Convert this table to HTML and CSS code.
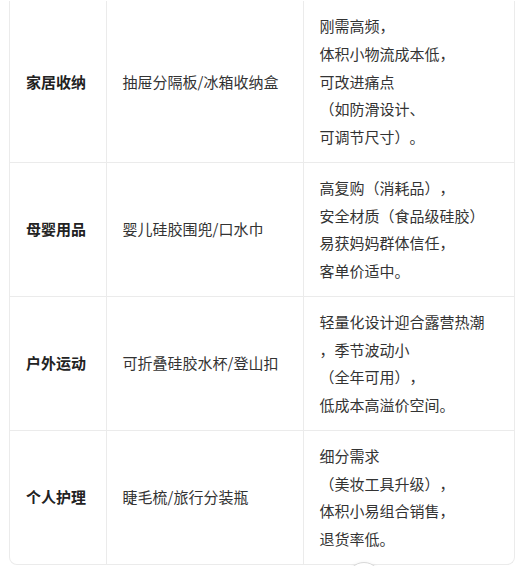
FILE: index.html
```html
<!DOCTYPE html>
<html lang="zh-CN">
<head>
<meta charset="utf-8">
<title>选品表</title>
<link rel="stylesheet" href="styles.css">
</head>
<body>
<div class="table-wrap">
  <table class="pick-table">
    <tbody>
      <tr>
        <td class="cat">家居收纳</td>
        <td class="prod">抽屉分隔板/冰箱收纳盒</td>
        <td class="why">刚需高频，<br>体积小物流成本低，<br>可改进痛点<br>（如防滑设计、<br>可调节尺寸）。</td>
      </tr>
      <tr>
        <td class="cat">母婴用品</td>
        <td class="prod">婴儿硅胶围兜/口水巾</td>
        <td class="why">高复购（消耗品），<br>安全材质（食品级硅胶）<br>易获妈妈群体信任，<br>客单价适中。</td>
      </tr>
      <tr>
        <td class="cat">户外运动</td>
        <td class="prod">可折叠硅胶水杯/登山扣</td>
        <td class="why">轻量化设计迎合露营热潮<br>，季节波动小<br>（全年可用），<br>低成本高溢价空间。</td>
      </tr>
      <tr>
        <td class="cat">个人护理</td>
        <td class="prod">睫毛梳/旅行分装瓶</td>
        <td class="why">细分需求<br>（美妆工具升级），<br>体积小易组合销售，<br>退货率低。</td>
      </tr>
    </tbody>
  </table>
</div>
<button class="scroll-btn" type="button" aria-label="滚动到底部"></button>
</body>
</html>
```

FILE: styles.css
```css
html, body {
  margin: 0;
  padding: 0;
  background: #ffffff;
}

body {
  font-family: "Noto Sans CJK SC", "Noto Sans", sans-serif;
  color: #333333;
  font-size: 15px;
  overflow: hidden;
  height: 566px;
  position: relative;
  text-spacing-trim: space-all;
}

.table-wrap {
  margin: 1px 0 0 9px;
  width: 506px;
  box-sizing: border-box;
  border: 1px solid #ebebeb;
  border-top: 0;
  border-radius: 0 0 8px 8px;
  overflow: hidden;
}

.pick-table {
  width: 100%;
  border-collapse: collapse;
  table-layout: fixed;
}

.pick-table td {
  padding: 11px 16px;
  line-height: 27.75px;
  vertical-align: middle;
  border-left: 1px solid #ebebeb;
  border-bottom: 1px solid #ebebeb;
  white-space: nowrap;
}

.pick-table tr:last-child td {
  border-bottom: 0;
}

.pick-table td:first-child {
  border-left: 0;
}

.cat {
  width: 96px;
  box-sizing: border-box;
  font-weight: 700;
  color: #222222;
}

.prod {
  width: 197px;
  box-sizing: border-box;
}

.why {
  color: #333333;
}

.scroll-btn {
  position: absolute;
  left: 347px;
  top: 562px;
  width: 34px;
  height: 34px;
  border-radius: 50%;
  border: 1px solid #d9d9d9;
  background: #ffffff;
  padding: 0;
  box-shadow: 0 1px 4px rgba(0, 0, 0, 0.08);
}
```
